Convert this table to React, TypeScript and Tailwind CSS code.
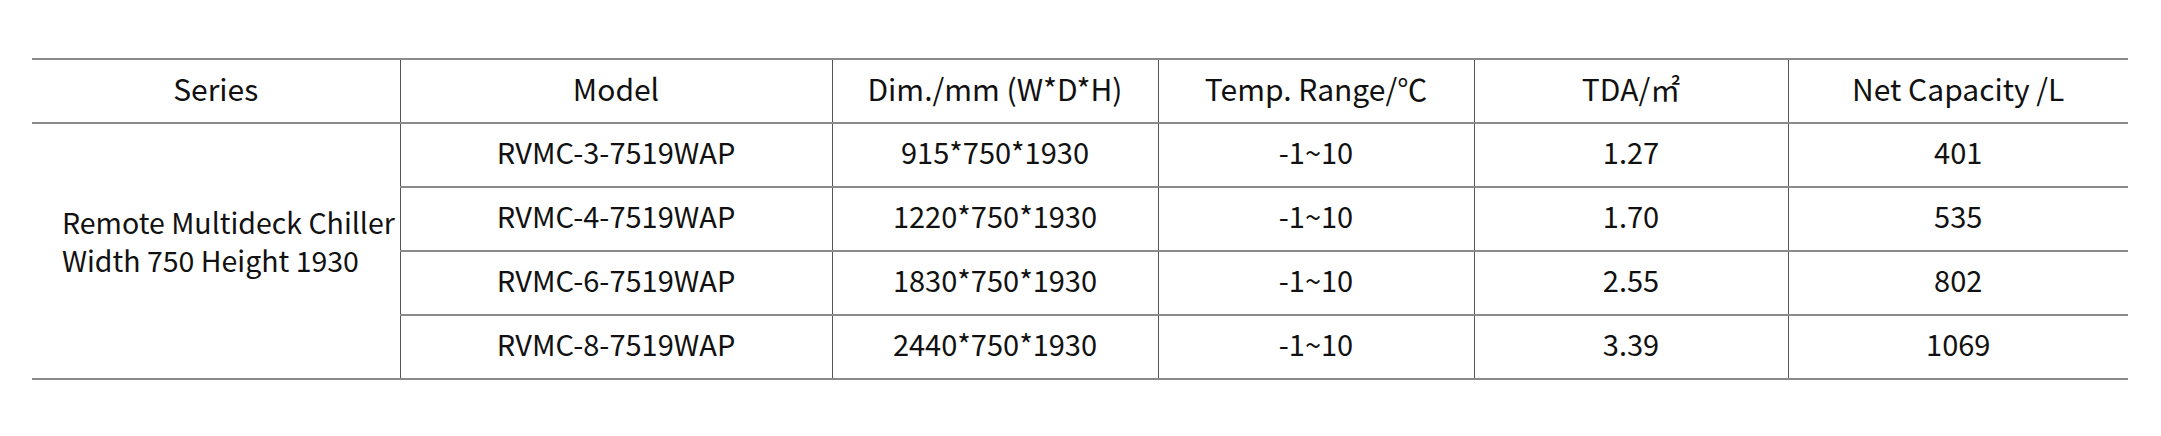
const rows = [
  { model: 'RVMC-3-7519WAP', dim: '915*750*1930', temp: '-1~10', tda: '1.27', cap: '401' },
  { model: 'RVMC-4-7519WAP', dim: '1220*750*1930', temp: '-1~10', tda: '1.70', cap: '535' },
  { model: 'RVMC-6-7519WAP', dim: '1830*750*1930', temp: '-1~10', tda: '2.55', cap: '802' },
  { model: 'RVMC-8-7519WAP', dim: '2440*750*1930', temp: '-1~10', tda: '3.39', cap: '1069' },
];

const cell = 'border-x border-[#555] text-center align-middle p-0 pb-[6px]';
const head = `${cell} font-normal text-[30px]`;

export default function App() {
  return (
    <div
      className="w-[2161px] h-[436px] bg-white pt-[58px] pl-[32px] text-[29px] text-[#111]"
      style={{ fontFamily: '"Noto Sans CJK SC", "Noto Sans", sans-serif' }}
    >
      <table className="w-[2096px] border-collapse table-fixed">
        <colgroup>
          <col className="w-[368px]" />
          <col className="w-[432px]" />
          <col className="w-[326px]" />
          <col className="w-[316px]" />
          <col className="w-[314px]" />
          <col className="w-[340px]" />
        </colgroup>
        <thead>
          <tr className="h-[64px] border-y-2 border-[#8a8a8a]">
            <th className={`${head} border-l-0`}>Series</th>
            <th className={head}>Model</th>
            <th className={head}>Dim./mm (W*D*H)</th>
            <th className={head}>Temp. Range/℃</th>
            <th className={head}>TDA/㎡</th>
            <th className={`${head} border-r-0`}>Net Capacity /L</th>
          </tr>
        </thead>
        <tbody>
          {rows.map((r, i) => (
            <tr key={r.model} className="h-[64px] border-b-2 border-[#8a8a8a]">
              {i === 0 && (
                <td
                  rowSpan={4}
                  className="border-r border-[#555] text-left align-middle pl-[30px] pr-0 pb-[20px] text-[28.5px] leading-[38px] whitespace-nowrap"
                >
                  Remote Multideck Chiller
                  <br />
                  Width 750 Height 1930
                </td>
              )}
              <td className={cell}>{r.model}</td>
              <td className={cell}>{r.dim}</td>
              <td className={cell}>{r.temp}</td>
              <td className={cell}>{r.tda}</td>
              <td className={`${cell} border-r-0`}>{r.cap}</td>
            </tr>
          ))}
        </tbody>
      </table>
    </div>
  );
}
